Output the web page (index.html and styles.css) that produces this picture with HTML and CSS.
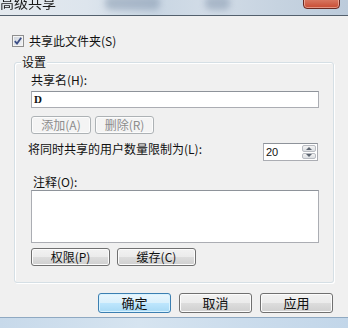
FILE: index.html
```html
<!DOCTYPE html>
<html lang="zh-CN">
<head>
    <meta charset="UTF-8">
    <title>高级共享</title>
    <link rel="stylesheet" href="styles.css">
</head>
<body>
    <div id="window">
        <div class="titlebar">
            <span class="title">高级共享</span>
            <span class="blur blur-a"></span>
            <span class="blur blur-b"></span>
            <span class="close"></span>
        </div>

        <div class="client">
            <label class="check-row">
                <span class="checkbox">
                    <svg width="8" height="8" viewBox="0 0 8 8">
                        <path d="M0.8 4.2 L3 6.6 L7.2 0.8" fill="none" stroke="#3d4f86" stroke-width="1.8"/>
                    </svg>
                </span>
                <span>共享此文件夹(S)</span>
            </label>

            <div class="group">
                <div class="legend"><span>设置</span></div>

                <div class="label name-label">共享名(H):</div>
                <div class="field">D</div>

                <div class="btn-row small-gap">
                    <button class="btn disabled w60">添加(A)</button>
                    <button class="btn disabled w59">删除(R)</button>
                </div>

                <div class="limit-row">
                    <div class="label limit-label">将同时共享的用户数量限制为(L):</div>
                    <div class="spinner">
                        <div class="spin-value">20</div>
                        <div class="spin-arrows">
                            <div class="arrow up"></div>
                            <div class="arrow down"></div>
                        </div>
                    </div>
                </div>

                <div class="label note-label">注释(O):</div>
                <div class="textarea"></div>

                <div class="btn-row wide-gap">
                    <button class="btn w79">权限(P)</button>
                    <button class="btn w79">缓存(C)</button>
                </div>
            </div>

            <div class="footer">
                <button class="btn big default">确定</button>
                <button class="btn big">取消</button>
                <button class="btn big">应用</button>
            </div>
        </div>

        <div class="frame-bottom"></div>
    </div>
</body>
</html>
```

FILE: styles.css
```css
* {
    margin: 0;
    padding: 0;
    box-sizing: border-box;
}

body {
    width: 348px;
    height: 328px;
    overflow: hidden;
    background-color: #f0f0f0;
    font-family: "Noto Sans CJK SC", "Liberation Sans", sans-serif;
    font-size: 12px;
    color: #111;
}

#window {
    width: 348px;
    height: 328px;
    display: flex;
    flex-direction: column;
}

/* title bar */
.titlebar {
    position: relative;
    height: 16px;
    flex-shrink: 0;
    overflow: hidden;
    background: linear-gradient(90deg, #e4e9ee 0%, #dde5ed 25%, #c9d6e3 45%, #d2dce7 60%, #c6d3e0 80%, #bccbdb 100%);
    border-bottom: 1px solid #53606d;
    display: flex;
    align-items: flex-start;
}

.title {
    margin-top: -6px;
    font-size: 14px;
    line-height: 16px;
    color: #1a1a1a;
    filter: blur(0.4px);
}

.blur {
    position: absolute;
    top: -4px;
    height: 14px;
    border-radius: 6px;
    background-color: rgba(120, 140, 165, 0.45);
    filter: blur(3px);
}

.blur-a {
    left: 105px;
    width: 55px;
}

.blur-b {
    left: 205px;
    width: 25px;
}

.close {
    margin-left: auto;
    margin-right: 8px;
    margin-top: -6px;
    width: 37px;
    height: 15px;
    border: 1px solid #6b2a22;
    border-radius: 0 0 4px 4px;
    background: linear-gradient(#e0907c, #c84b32);
    box-shadow: inset 0 0 0 1px rgba(255, 220, 210, 0.5);
}

/* client area */
.client {
    height: 301px;
    flex-shrink: 0;
    padding-top: 18px;
    background-color: #f0f0f0;
    display: flex;
    flex-direction: column;
}

.client > *,
.group > * {
    flex-shrink: 0;
}

.check-row {
    height: 14px;
    display: flex;
    align-items: center;
    margin-left: 12px;
    line-height: 14px;
}

.checkbox {
    width: 12px;
    height: 12px;
    margin-right: 5px;
    border: 1px solid #8f8f8f;
    background: linear-gradient(135deg, #cdd3dc, #f3f4f6);
    box-shadow: inset 0 0 0 1px #f4f4f4;
    display: flex;
    align-items: center;
    justify-content: center;
}

.group {
    margin-top: 14px;
    margin-left: 14px;
    width: 320px;
    padding: 0 14px 16px 16px;
    border: 1px solid #d5dfe5;
    border-radius: 3px;
    box-shadow: inset 1px 1px 0 #fff, 1px 1px 0 #fff;
    display: flex;
    flex-direction: column;
}

.legend {
    height: 12px;
    margin-top: -7px;
    margin-left: -10px;
    line-height: 12px;
}

.legend span {
    background-color: #f0f0f0;
    padding: 0 1px;
}

.label {
    line-height: 14px;
    height: 14px;
}

.name-label {
    margin-top: 5px;
}

.field {
    margin-top: 4px;
    height: 17px;
    border: 1px solid #abadb3;
    border-top-color: #8e939a;
    background-color: #fff;
    padding-left: 2px;
    font-family: "Liberation Serif", serif;
    font-weight: bold;
    font-size: 11px;
    line-height: 15px;
}

.btn-row {
    display: flex;
    margin-top: 8px;
}

.small-gap {
    gap: 4px;
}

.wide-gap {
    margin-top: 5px;
    gap: 7px;
}

.btn {
    height: 18px;
    font-family: "Noto Sans CJK SC", "Liberation Sans", sans-serif;
    font-size: 12px;
    line-height: 14px;
    color: #111;
    border: 1px solid #707070;
    border-radius: 3px;
    background: linear-gradient(#f2f2f2 0%, #ebebeb 50%, #dddddd 51%, #cfcfcf 100%);
    box-shadow: inset 0 0 0 1px #fcfcfc;
}

.btn.disabled {
    color: #8c8c8c;
    border-color: #adb2b5;
    background: #f4f4f4;
}

.w60 { width: 60px; }
.w59 { width: 59px; }
.w79 { width: 79px; }

.limit-row {
    margin-top: 9px;
    display: flex;
    align-items: flex-start;
}

.limit-label {
    margin-left: -3px;
    margin-top: -1px;
}

.spinner {
    margin-left: auto;
    margin-right: 1px;
    width: 55px;
    height: 18px;
    border: 1px solid #abadb3;
    border-top-color: #8e939a;
    background-color: #fff;
    display: flex;
}

.spin-value {
    flex: 1;
    padding-left: 2px;
    font-family: "Liberation Sans", sans-serif;
    font-size: 11px;
    line-height: 16px;
}

.spin-arrows {
    width: 16px;
    display: flex;
    flex-direction: column;
    gap: 1px;
    padding: 1px;
}

.arrow {
    flex: 1;
    border: 1px solid #b9bcc2;
    border-radius: 2px;
    background: linear-gradient(#f4f4f4, #dcdfe3);
    display: flex;
    align-items: center;
    justify-content: center;
}

.arrow::after {
    content: "";
    width: 0;
    height: 0;
    border-left: 3px solid transparent;
    border-right: 3px solid transparent;
}

.up::after {
    border-bottom: 3px solid #5c6470;
}

.down::after {
    border-top: 3px solid #5c6470;
}

.note-label {
    margin-top: 14px;
    padding-left: 2px;
}

.textarea {
    margin-top: 1px;
    height: 53px;
    border: 1px solid #abadb3;
    border-top-color: #8e939a;
    background-color: #fff;
}

/* dialog buttons */
.footer {
    display: flex;
    justify-content: flex-end;
    gap: 8px;
    margin-top: 10px;
    padding-right: 15px;
}

.btn.big {
    width: 73px;
    height: 20px;
    font-size: 13px;
    line-height: 16px;
}

.btn.default {
    border-color: #3c7fb1;
    background: linear-gradient(#eaf6fd 0%, #d9f0fc 50%, #bee6fd 51%, #a7d9f5 100%);
    box-shadow: inset 0 0 0 1px #d9f3ff;
}

.frame-bottom {
    height: 11px;
    flex-shrink: 0;
    border-top: 1px solid #8fa9c2;
    background: linear-gradient(90deg, #c7d9ea, #d6e4f0 40%, #cbdcec 70%, #c2d6e9);
}
```
